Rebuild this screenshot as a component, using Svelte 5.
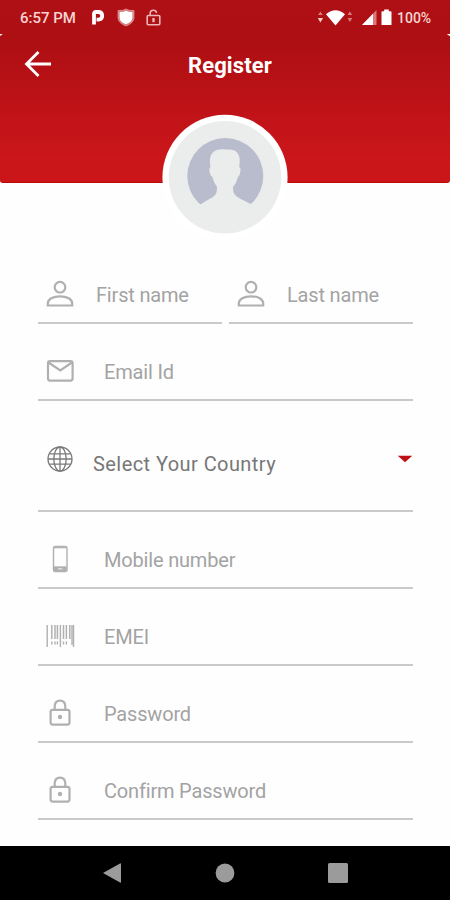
<script>
  const names = ['First name', 'Last name'];
  const fields = [
    { label: 'Email Id', icon: 'mail', height: 77 },
    { label: 'Select Your Country', icon: 'globe', height: 111 },
    { label: 'Mobile number', icon: 'phone', height: 77 },
    { label: 'EMEI', icon: 'barcode', height: 77 },
    { label: 'Password', icon: 'lock', height: 77 },
    { label: 'Confirm Password', icon: 'lock', height: 77 }
  ];
</script>

{#snippet icon(name)}
  <svg class="icon" class:dark={name === 'globe'} width="30" height="30" viewBox="0 0 30 30">
    {#if name === 'person'}
      <circle cx="15" cy="8.2" r="5.3" />
      <path d="M2.8 26.5V24.5C2.8 20 8 17.3 15 17.3S27.2 20 27.2 24.5V26.5Z" />
    {:else if name === 'mail'}
      <rect x="3" y="5.2" width="24.6" height="19.4" rx="2" />
      <path d="M3.5 6.5L15.3 14.5L27 6.5" />
    {:else if name === 'globe'}
      <g stroke-width="1.3">
        <circle cx="15" cy="15" r="12" />
        <ellipse cx="15" cy="15" rx="6.2" ry="12" />
        <path d="M15 3V27M3 15H27M5 9.8H25M5 20.2H25" />
      </g>
    {:else if name === 'phone'}
      <path d="M10.3 2.5H20.2Q22 2.5 22 4.3V25.7Q22 27.5 20.2 27.5H10.3Q8.5 27.5 8.5 25.7V4.3Q8.5 2.5 10.3 2.5Z" stroke-width="1.4" />
      <path d="M9 3.7H21.5" stroke-width="1.2" />
      <path d="M9 22.3H21.5V27H9Z" class="solid" />
      <path d="M13 24.7H17.5" stroke="#ddd" stroke-width="1.5" />
    {:else if name === 'barcode'}
      <path d="M2.2 4V26M28.5 4V26" stroke-width="1.4" />
      <path d="M6.8 4V18M10 4V18M12.4 4V18M18.5 4V18M21.4 4V18M24.8 4V18" stroke-width="1.5" />
      <path d="M15.4 4V26M27 4V24" stroke-width="1.4" />
      <path d="M6.8 20.5V23.5M10 20.5V23.5M12.4 20.5V23.5M18.5 20.5V23.5M21.4 20.5V23.5" stroke-width="1.4" />
    {:else}
      <rect x="5.6" y="11.8" width="18.9" height="14.8" rx="2" />
      <path d="M9.7 11.5V8Q10.2 2.6 15 2.6T20.3 8V11.5" />
      <circle cx="15" cy="19" r="2.2" class="solid" />
    {/if}
  </svg>
{/snippet}

<main>
  <header>
    <div class="status">
      <span class="time">6:57 PM</span>
      <svg class="p" width="14" height="17" viewBox="0 0 14 17"><path d="M3 15.5V4.8Q3 3 5 3H7.2Q11.2 3 11.2 6.8T7.3 10.6H5.5" fill="none" stroke="#fff" stroke-width="3.8" /></svg>
      <svg class="shield" width="18" height="19" viewBox="0 0 18 19"><path d="M9 1Q12 3 17 2.5V9.5Q17 15 9 18Q1 15 1 9.5V2.5Q6 3 9 1Z" fill="#fff" fill-opacity=".45" stroke="#e9a5a5" stroke-width=".7" /><path d="M9 2.7Q11.5 4.2 15.4 4V9.5Q15.4 14 9 16.3Q2.6 14 2.6 9.5V4Q6.5 4.2 9 2.7Z" fill="#fff" /></svg>
      <svg class="unlock" width="15" height="17" viewBox="0 0 15 17" fill="none" stroke="#efb5b5" stroke-width="1.6"><rect x="1.2" y="6.5" width="12.6" height="9.3" rx="1" /><path d="M4.2 6.4V4Q4.2 1.2 7.3 1.2T10.4 4" /><path d="M7.5 9V13.2" stroke-width="2.4" /></svg>
      <span class="grow"></span>
      <svg width="36" height="19" viewBox="0 0 36 19"><path d="M1 7L3.4 3.5L5.8 7ZM30.5 7L32.9 3.5L35.3 7ZM30.5 10L32.9 14L35.3 10Z" fill="#db7777" /><path d="M.8 10H6L3.4 14.5Z" fill="#f9d5c5" /><path d="M9 6.3Q18.5 -1.8 28 6.3L18.5 17.5Z" fill="#fff" /></svg>
      <svg class="signal" width="15" height="17" viewBox="0 0 15 17"><path d="M0 16L14.5 1V16Z" fill="#df7777" /><path d="M0 16L11 4.7V16Z" fill="#fff" /></svg>
      <svg class="battery" width="11" height="17" viewBox="0 0 11 17"><path d="M.5 3.2Q.5 2.2 1.5 2.2H3.2V.5H7.8V2.2H9.5Q10.5 2.2 10.5 3.2V16H.5Z" fill="#fff" /></svg>
      <span class="pct">100%</span>
    </div>
    <svg class="edge" width="450" height="5" viewBox="0 0 450 5"><path d="M0 0Q2 0 3 -1Q2 1.5 0 1.8ZM450 0Q448 0 446 -1Q448 1.5 450 2Z" fill="#fff" /></svg>
    <div class="bar">
      <svg class="back" width="28" height="28" viewBox="0 0 28 28" fill="none" stroke="#fff" stroke-width="2.8"><path d="M27 13H3M14.5 1L2.5 13L14.5 25" /></svg>
      <h1>Register</h1>
    </div>
  </header>

  <div class="avatar">
    <svg width="126" height="126" viewBox="0 0 126 126">
      <circle cx="63" cy="63.4" r="62.6" fill="#fff" />
      <circle cx="63" cy="63.3" r="56.3" fill="#ebecec" />
      <circle cx="63.3" cy="62" r="38" fill="#b9bccd" />
      <path d="M63 35.5C53 34.5 47.5 39 47.9 48L48.5 53Q46.5 54 47.9 59Q48.7 62.5 50.5 63Q52 69.5 55 72.5Q55.5 80.5 51 83Q43 87.5 37 91.2V103H91V91.2Q80.5 86 75.5 83Q70.5 80 71 73Q74.5 69 76 63Q77.8 62 78.3 58Q79.1 54 77.2 53Q80 36 68 35.5Z" fill="#ebecec" />
    </svg>
  </div>

  <form>
    <div class="names">
      {#each names as label}
        <div class="field">
          <div class="line small">{@render icon('person')}<span>{label}</span></div>
        </div>
      {/each}
    </div>
    {#each fields as field}
      <div class="field" class:country={field.icon === 'globe'} style:height="{field.height}px">
        <div class="line">
          {@render icon(field.icon)}<span>{field.label}</span>
          {#if field.icon === 'globe'}
            <svg class="caret" width="16" height="8" viewBox="0 0 16 8"><path d="M.7 .7H15.3L8 7.2Z" fill="#bd1017" /></svg>
          {/if}
        </div>
      </div>
    {/each}
  </form>

  <nav>
    <svg width="20" height="22" viewBox="0 0 20 22"><path d="M1 11L18 1.5Q19 1 19 2V20Q19 21 18 20.5Z" /></svg>
    <svg width="20" height="20" viewBox="0 0 20 20"><circle cx="10" cy="10" r="9.4" /></svg>
    <svg width="20" height="20" viewBox="0 0 20 20"><rect width="20" height="20" rx="1.5" /></svg>
  </nav>
</main>

<style>
  :global(body) { margin: 0; }
  main { width: 450px; height: 900px; background: #fefefe; font-family: Roboto, sans-serif; display: flex; flex-direction: column; overflow: hidden; }
  svg { display: block; flex: none; }
  header { height: 183px; flex: none; box-sizing: border-box; background: linear-gradient(#ae1015 0, #ad0f13 42px, #bd1217 100px, #cb161a 160px, #cb1518 100%); border-bottom: 1px solid #bb080b; border-radius: 0 0 3px 3px; }
  .status { height: 34px; display: flex; align-items: center; padding: 1px 19px 0 20px; box-sizing: border-box; color: #f8d4d2; }
  .time { font-size: 15px; font-weight: 500; width: 57px; white-space: nowrap; }
  .p { margin-left: 14px; }
  .shield { margin-left: 12px; }
  .unlock { margin-left: 11px; }
  .grow { flex: 1; }
  .signal { margin-left: 9px; }
  .battery { margin-left: 4px; }
  .pct { font-size: 14px; font-weight: 500; margin-left: 5px; width: 34px; white-space: nowrap; }
  .edge { height: 5px; }
  .bar { height: 52px; display: flex; align-items: center; padding-left: 24px; }
  h1 { margin: 2px 0 0 136px; color: #fff; font-size: 22px; line-height: 28px; font-weight: 700; letter-spacing: .1px; }
  .avatar { align-self: center; height: 126px; margin-top: -69px; position: relative; }
  form { margin: 26px 37px 0 38px; }
  .names { display: flex; gap: 7px; height: 58px; }
  .names .field { flex: 1; }
  .field { box-sizing: border-box; border-bottom: 2px solid #c9c9c9; display: flex; align-items: flex-end; }
  .line { flex: 1; height: 56px; display: flex; align-items: center; padding-left: 7px; }
  .line span { font-size: 20px; line-height: 24px; font-weight: 400; color: #a3a3a3; letter-spacing: -.18px; margin: 1px 0 0 29px; white-space: nowrap; }
  .line.small span { margin-left: 21px; }
  .icon { fill: none; stroke: #b0b0b0; stroke-width: 2.2; }
  .icon.dark { stroke: #7a7a7a; margin-top: -9px; }
  .icon .solid { fill: #b0b0b0; stroke: none; }
  .country { align-items: flex-start; }
  .country .line { margin-top: 34px; }
  .country .line span { color: #777; margin-left: 18px; letter-spacing: .43px; }
  .caret { margin: -9px 0 0 auto; }
  nav { height: 54px; margin-top: auto; flex: none; background: #000; display: flex; align-items: center; justify-content: space-between; padding: 0 102px; box-sizing: border-box; }
  nav svg { fill: #9b9b9b; }
</style>
